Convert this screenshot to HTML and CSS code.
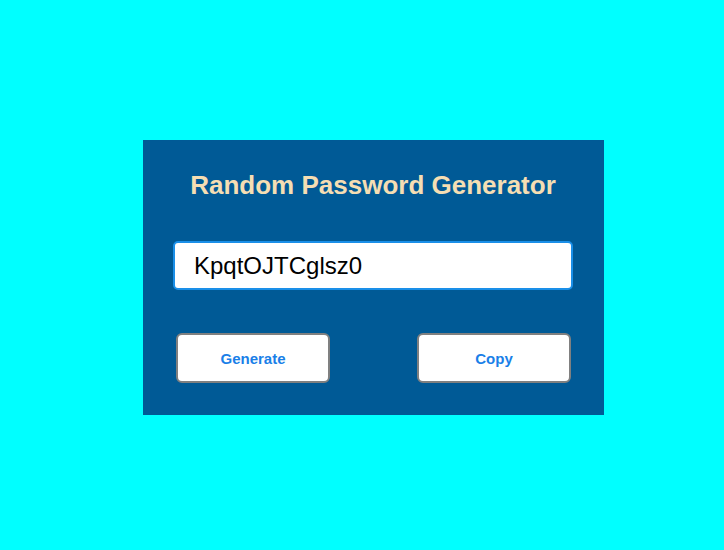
FILE: index.html
```html
<!DOCTYPE html>
<html>
<head>
<meta charset="utf-8">
<link rel="stylesheet" href="styles.css">
</head>
<body>
<div class="card">
  <h1 class="title">Random Password Generator</h1>
  <input class="pw" type="text" value="KpqtOJTCglsz0">
  <div class="actions">
    <button class="btn">Generate</button>
    <button class="btn">Copy</button>
  </div>
</div>
</body>
</html>
```
FILE: styles.css
```css
html, body {
  margin: 0;
  padding: 0;
  background: #00ffff;
  height: 100%;
}
body {
  font-family: "Liberation Sans", Arial, sans-serif;
}
.card {
  box-sizing: border-box;
  width: 461px;
  height: 275px;
  margin: 140px 0 0 143px;
  background: #005a96;
  padding: 30px 31px 0 30px;
}
.title {
  margin: 0;
  height: 35px;
  padding-top: 0;
  text-align: center;
  color: #f5deb3;
  font-size: 26px;
  font-weight: bold;
  line-height: 30px;
}
.pw {
  display: block;
  box-sizing: border-box;
  width: 400px;
  height: 49px;
  margin-top: 36px;
  border: 2px solid #1a8fe8;
  border-radius: 5px;
  background: #fff;
  padding: 0 0 0 19px;
  font-family: "Liberation Sans", Arial, sans-serif;
  font-size: 24px;
  color: #000;
  outline: none;
}
.actions {
  display: flex;
  justify-content: space-between;
  margin-top: 43px;
  padding: 0 2px 0 3px;
}
.btn {
  box-sizing: border-box;
  width: 154px;
  height: 50px;
  background: #fff;
  border: 2px solid #808080;
  border-radius: 6px;
  color: #1a7fe8;
  font-family: "Liberation Sans", Arial, sans-serif;
  font-size: 15px;
  font-weight: bold;
  padding: 0;
}
```
